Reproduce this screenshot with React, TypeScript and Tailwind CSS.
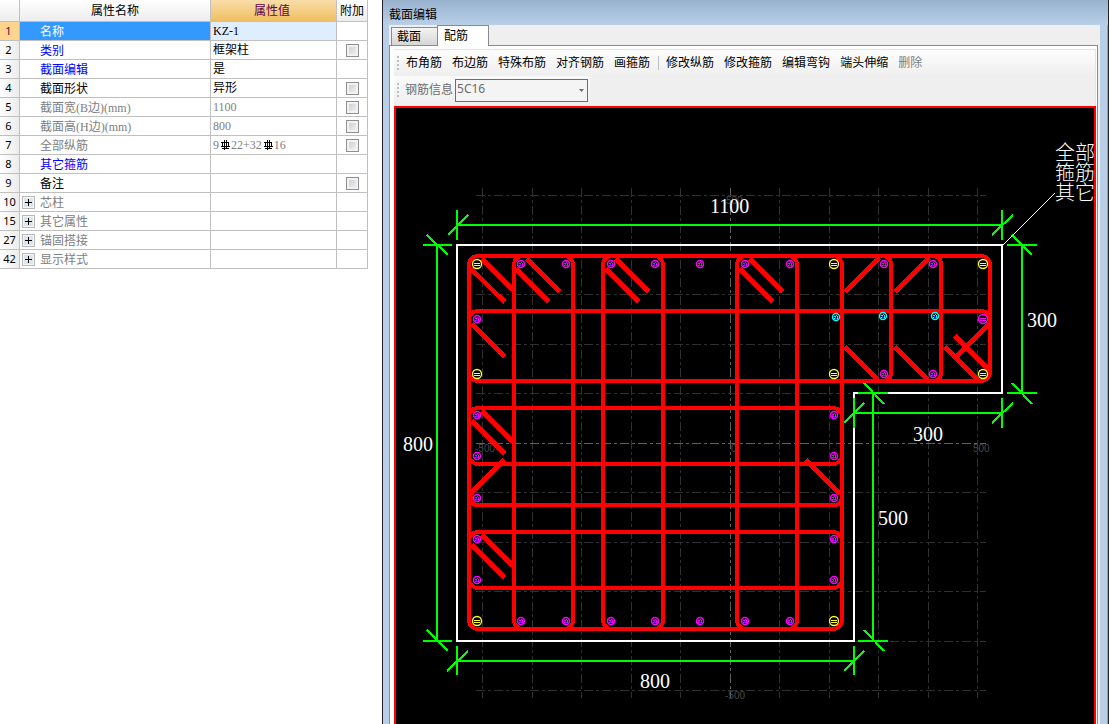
import type { ReactNode } from "react";
import clsx from "clsx";

type Row = {
  id: number;
  name: string;
  value?: ReactNode;
  tone: "selected" | "key" | "normal" | "muted";
  check?: boolean;
  group?: boolean;
};

function RebarMark() {
  return (
    <svg className="ml-px inline-block align-[-1px]" width="11" height="10" viewBox="0 0 11 10" fill="none" stroke="#000" shapeRendering="crispEdges" aria-hidden="true">
      <path d="M4.5 0V10M6.5 0V9M1 2.5H9M2.5 2V6M8.5 2V7M1 6.5H10M2 8.5H9" />
    </svg>
  );
}

const rows: Row[] = [
  { id: 1, name: "名称", value: "KZ-1", tone: "selected" },
  { id: 2, name: "类别", value: "框架柱", tone: "key", check: true },
  { id: 3, name: "截面编辑", value: "是", tone: "key" },
  { id: 4, name: "截面形状", value: "异形", tone: "normal", check: true },
  { id: 5, name: "截面宽(B边)(mm)", value: "1100", tone: "muted", check: true },
  { id: 6, name: "截面高(H边)(mm)", value: "800", tone: "muted", check: true },
  { id: 7, name: "全部纵筋", value: <>9<RebarMark />22+32<RebarMark />16</>, tone: "muted", check: true },
  { id: 8, name: "其它箍筋", tone: "key" },
  { id: 9, name: "备注", tone: "normal", check: true },
  { id: 10, name: "芯柱", tone: "muted", group: true },
  { id: 15, name: "其它属性", tone: "muted", group: true },
  { id: 27, name: "锚固搭接", tone: "muted", group: true },
  { id: 42, name: "显示样式", tone: "muted", group: true },
];

const nameTone = {
  selected: "bg-[#3399ff] text-white",
  key: "text-[#0000ff]",
  normal: "text-black",
  muted: "text-[#808080]",
};

const cell = "border-r border-b border-[#c0c0c0] p-0";

function PropertyTable() {
  return (
    <table className="w-[368px] table-fixed border-separate border-spacing-0 font-['Liberation_Serif','Noto_Sans_CJK_SC',serif] text-[12px] leading-[18px]">
      <colgroup>
        <col className="w-[20px]" />
        <col className="w-[191px]" />
        <col className="w-[126px]" />
        <col className="w-[31px]" />
      </colgroup>
      <thead>
        <tr className="h-[22px] bg-linear-to-b from-white to-[#ececec]">
          <th className={cell} aria-label="序号" />
          <th className={clsx(cell, "font-normal")}>属性名称</th>
          <th className={clsx(cell, "bg-linear-to-b from-[#f9dda8] to-[#f0bf60] pr-[3px] font-normal text-[#600050]")}>属性值</th>
          <th className={clsx(cell, "font-normal whitespace-nowrap")}>附加</th>
        </tr>
      </thead>
      <tbody>
        {rows.map((row) => (
          <tr key={row.id} className="h-[19px]">
            <th
              className={clsx(
                cell,
                "font-['Noto_Sans','Liberation_Sans',sans-serif] text-[11px] font-normal",
                row.id === 1 ? "bg-[#ffd58d] text-[#600050]" : "bg-linear-to-r from-white to-[#ececec]",
                row.group ? "pr-0" : "pr-[2px]",
              )}
            >
              {row.id}
            </th>
            <td className={clsx(cell, nameTone[row.tone])}>
              <div className="flex h-[18px] items-center pt-[2px]">
                <span className="flex w-[20px] pl-[2px]">
                  {row.group && (
                    <button type="button" aria-label={"展开" + row.name} className="mb-[2px] size-[13px] border border-[#b8b8b8] bg-[#dfe3ea] text-black shadow-[inset_0_0_0_1px_#f6f6f6]">
                      <svg width="11" height="11" viewBox="0 0 11 11" stroke="#000" shapeRendering="crispEdges" aria-hidden="true">
                        <path d="M2 5.5H9M5.5 2V9" />
                      </svg>
                    </button>
                  )}
                </span>
                <span>{row.name}</span>
              </div>
            </td>
            <td className={clsx(cell, "pl-[2px]", row.id === 1 && "bg-[#dfeeff]", row.tone === "muted" ? "text-[#808080]" : "text-black")}>
              <div className="h-[18px]">{row.value}</div>
            </td>
            <td className={cell}>
              {row.check && (
                <input
                  type="checkbox"
                  aria-label={"附加 " + row.name}
                  className="mx-auto block size-[13px] appearance-none border border-[#8e8f8f] bg-linear-to-br from-[#c4cad3] to-[#f6f6f6] shadow-[inset_0_0_0_2px_#f2f2f2]"
                />
              )}
            </td>
          </tr>
        ))}
      </tbody>
    </table>
  );
}

const gridX = [482, 532, 581, 631, 680, 730, 779, 829, 878, 928, 977];
const gridY = [195, 245, 294, 344, 393, 443, 492, 542, 591, 641, 690];

/* Closed stirrups: left, top, right, bottom */
const stirrups = [
  [469, 256, 842, 629],
  [469, 256, 990, 381],
  [469, 311, 990, 381],
  [514, 256, 573, 629],
  [603, 256, 663, 629],
  [737, 256, 797, 629],
  [469, 408, 842, 464],
  [469, 532, 842, 588],
];

/* Legs that share the side of a closed stirrup */
const openTies = [
  "M842 256H882Q891 256 891 265V372Q891 381 882 381H842",
  "M842 256H932Q941 256 941 265V372Q941 381 932 381H842",
  "M471 493Q469 505 477 505H834Q842 505 842 496",
];

const hooks = [
  "M482 259L513 290M471 269L505 302",
  "M527 259L560 292M516 269L549 302",
  "M616 259L649 292M606 269L639 302",
  "M750 259L783 292M740 269L773 302",
  "M472 324L505 357",
  "M845 292L879 258M845 347L878 380",
  "M895 292L929 258M895 347L928 380",
  "M945 347L978 380M955 336L989 370M956 357L989 324",
  "M482 411L513 442M472 421L505 454",
  "M482 535L513 566M472 545L505 578",
  "M504 460L471 493M840 494L806 460",
];

const dimensions = [
  "M457 225H1002M457 210V240M448 235L468 215M1002 210V240M992 235L1013 215",
  "M437 245V641M423 245H452M427 235L448 255M423 641H452M427 630L448 651",
  "M457 661H854M457 646V675M447 671L468 651M854 646V675M844 671L864 651",
  "M1022 245V393M1007 245H1037M1012 235L1032 255M1007 393H1037M1012 383L1032 404",
  "M854 413H1002M854 398V428M844 423L864 403M1002 398V428M992 423L1013 403",
  "M873 393V641M858 393H888M864 383L884 404M858 641H888M864 630L884 651",
];

const cornerBars = [
  [477, 264], [834, 264], [983, 264],
  [477, 374], [834, 374], [983, 374],
  [477, 621], [834, 621],
];

const sideBars = [
  ...[521, 566, 611, 655, 700, 745, 790, 884, 933].map((x) => [x, 264]),
  ...[521, 566, 611, 655, 700, 745, 790].map((x) => [x, 621]),
  ...[884, 933].map((x) => [x, 374]),
  ...[319, 415, 456, 498, 539, 580].map((y) => [477, y]),
  ...[415, 456, 498, 539, 580].map((y) => [834, y]),
];

const hookBars = [[836, 317], [883, 316], [935, 316]];

function LargeBar({ x, y, color }: { x: number; y: number; color: string }) {
  return (
    <g transform={`translate(${x} ${y})`} stroke={color} fill="none">
      <circle r="4.5" fill="#000" strokeWidth="1.3" shapeRendering="auto" />
      <path d="M-3 -0.5H3M-3 1.5H3" />
    </g>
  );
}

function SmallBar({ x, y, color }: { x: number; y: number; color: string }) {
  return (
    <g transform={`translate(${x} ${y})`} stroke={color} fill="none">
      <circle r="3.5" fill="#000" strokeWidth="1.5" shapeRendering="auto" />
      <path d="M-2 -0.5H0M1.5 -1V2M-1.5 1V2M0 -1.5H1" />
      <path d="M-0.5 0V2M0.5 1V2" stroke="#3a30ff" />
    </g>
  );
}

function SectionDrawing() {
  return (
    <svg className="block h-full w-full" role="img" aria-label="柱截面配筋图">
      <g transform="translate(-396 -108)" fill="none" shapeRendering="crispEdges">
        <g stroke="#303030" strokeDasharray="9 3 3 3">
          {gridX.map((x) => (
            <path key={x} d={`M${x + 0.5} 188V698`} stroke={x === 730 ? "#606060" : undefined} />
          ))}
          {gridY.map((y) => (
            <path key={y} d={`M476 ${y + 0.5}H986`} stroke={y === 443 ? "#606060" : undefined} />
          ))}
        </g>
        <g fill="#484848" fontSize="10" fontFamily="'Liberation Sans', sans-serif">
          <text x="726" y="204">500</text>
          <text x="475" y="452">-500</text>
          <text x="731" y="452">0</text>
          <text x="973" y="452">500</text>
          <text x="725" y="699">-500</text>
        </g>
        <path d="M457 245H1002V393H854V641H457Z" stroke="#fff" strokeWidth="2" />
        <g stroke="#00ff00" strokeWidth="2">
          {dimensions.map((d) => (
            <path key={d} d={d} />
          ))}
        </g>
        <g stroke="#ff0000" strokeWidth="4">
          {stirrups.map(([l, t, r, b]) => (
            <rect key={`${l}-${t}-${r}-${b}`} x={l} y={t} width={r - l} height={b - t} rx="9" />
          ))}
          {openTies.map((d) => (
            <path key={d} d={d} />
          ))}
        </g>
        <g stroke="#ff0000" strokeWidth="4.5">
          {hooks.map((d) => (
            <path key={d} d={d} />
          ))}
        </g>
        {cornerBars.map(([x, y]) => (
          <LargeBar key={`${x}-${y}`} x={x} y={y} color="#ffff33" />
        ))}
        <LargeBar x={983} y={319} color="#ff00ff" />
        {sideBars.filter(([x, y]) => x !== 983 || y !== 319).map(([x, y]) => (
          <SmallBar key={`${x}-${y}`} x={x} y={y} color="#ff00ff" />
        ))}
        {hookBars.map(([x, y]) => (
          <SmallBar key={`${x}-${y}`} x={x} y={y} color="#00ffff" />
        ))}
        <path d="M1003 245L1055 193" stroke="#fff" />
        <g fill="#fff" fontSize="20" fontFamily="'Liberation Serif', 'Noto Sans CJK SC', serif">
          <text x="710" y="213">1100</text>
          <text x="403" y="451">800</text>
          <text x="1027" y="327">300</text>
          <text x="913" y="441">300</text>
          <text x="878" y="525">500</text>
          <text x="640" y="688">800</text>
          <g fontWeight="300">
            <text x="1055" y="160">全部</text>
            <text x="1055" y="180">箍筋</text>
            <text x="1055" y="200">其它</text>
          </g>
        </g>
      </g>
    </svg>
  );
}

function Grip() {
  return (
    <span className="flex flex-col gap-[2px]" aria-hidden="true">
      <i className="size-[2px] bg-[#bdbdbd]" />
      <i className="size-[2px] bg-[#bdbdbd]" />
      <i className="size-[2px] bg-[#bdbdbd]" />
      <i className="size-[2px] bg-[#bdbdbd]" />
    </span>
  );
}

const drawTools = ["布角筋", "布边筋", "特殊布筋", "对齐钢筋", "画箍筋"];
const editTools = ["修改纵筋", "修改箍筋", "编辑弯钩", "端头伸缩"];

export default function App() {
  return (
    <div className="flex h-screen overflow-hidden bg-white font-['Noto_Sans','Noto_Sans_CJK_SC',sans-serif] text-[12px] text-black">
      <section className="w-[382px] shrink-0">
        <PropertyTable />
      </section>

      <main className="flex min-w-0 flex-1 flex-col border-x border-[#20242a] bg-[#b9cfe8]">
        <header className="flex h-[25px] shrink-0 items-center bg-linear-to-b from-[#98b2ce] to-[#b9cfe8] pt-[4px] pl-[6px]">
          <h1 className="leading-4">截面编辑</h1>
        </header>

        <div className="flex min-h-0 flex-1 border-r border-[#38c8e8] pr-[7px] pl-[6px]">
          <div className="flex min-w-0 flex-1 flex-col bg-[#efefef] pr-[2px]">
            <div role="tablist" className="flex h-[20px] shrink-0 items-end pl-[2px]">
              <button type="button" role="tab" aria-selected="false" className="h-[18px] w-[46px] border-t border-l border-[#868b97] bg-linear-to-b from-[#f4f4f4] to-[#d6d6d6] pt-px pl-[5px] text-left leading-[16px]">
                截面
              </button>
              <button type="button" role="tab" aria-selected="true" className="z-10 -mb-px h-[21px] w-[52px] border-x border-t border-[#868b97] bg-white pb-px pl-[6px] text-left leading-[19px]">
                配筋
              </button>
            </div>

            <div className="flex min-h-0 flex-1 flex-col border-x border-t border-[#868b97] bg-white pt-[3px] pr-px pl-[4px]">
              <div className="flex h-[57px] shrink-0 flex-col border-t border-r border-[#e4e4e4] bg-[#efefef]">
                <div role="toolbar" aria-label="配筋工具" className="flex h-[26px] shrink-0 items-center bg-linear-to-b from-[#fdfdfd] to-[#efefef] pl-[3px] whitespace-nowrap">
                  <Grip />
                  <div className="ml-[7px] flex gap-[10px]">
                    {drawTools.map((tool) => (
                      <button key={tool} type="button">{tool}</button>
                    ))}
                  </div>
                  <span className="mr-[7px] ml-[8px] h-[14px] w-px bg-[#bdbdbd]" />
                  <div className="flex gap-[10px]">
                    {editTools.map((tool) => (
                      <button key={tool} type="button">{tool}</button>
                    ))}
                    <button type="button" disabled className="text-[#808080]">删除</button>
                  </div>
                </div>
                <div className="flex h-[28px] w-[196px] items-center bg-linear-to-b from-[#fbfbfb] to-[#efefef] pl-[3px] text-[#6d6d6d]">
                  <Grip />
                  <label htmlFor="rebar-info" className="ml-[6px] whitespace-nowrap">钢筋信息</label>
                  <span className="relative ml-[2px]">
                    <select id="rebar-info" disabled className="block h-[23px] w-[133px] appearance-none border border-[#6d6d6d] bg-[#f4f4f4] pb-[2px] pl-px opacity-100">
                      <option>5C16</option>
                    </select>
                    <svg className="pointer-events-none absolute top-[10px] right-[3px]" width="7" height="4" viewBox="0 0 7 4" fill="#6d6d6d" aria-hidden="true">
                      <path d="M1 0H6L3.5 3Z" />
                    </svg>
                  </span>
                </div>
              </div>
              <div className="min-h-0 flex-1 overflow-hidden border-x-2 border-t-2 border-[#ff0000] bg-black">
                <SectionDrawing />
              </div>
            </div>
          </div>
        </div>
      </main>
    </div>
  );
}
